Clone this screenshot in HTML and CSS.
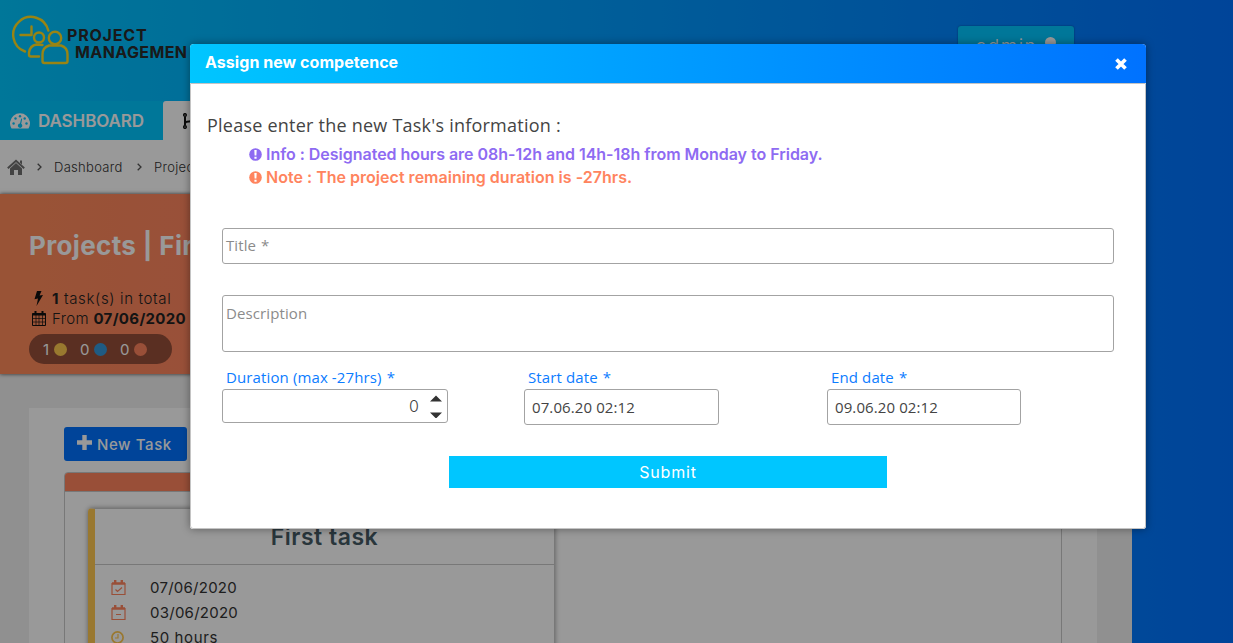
FILE: index.html
```html
<!DOCTYPE html>
<html lang="en">
<head>
<meta charset="utf-8">
<title>Project Management</title>
<link rel="stylesheet" href="styles.css">
</head>
<body>
<div class="page">
  <header class="header">
    <div class="brand">
      <svg class="logo" width="58" height="50" viewBox="0 0 58 50" fill="none" stroke="#ffdc20" stroke-width="2.4" stroke-linecap="round" stroke-linejoin="round">
        <path d="M14 36.5A17.800 17.800 0 1 1 37.300 15.500M20.500 11.500v8.500H9.500"/>
        <circle cx="28" cy="22.500" r="5"/>
        <path d="M28 41.500h-8q-2 0-2-2v-2q1-7 7.500-8l6 .5"/>
        <circle cx="44" cy="23" r="6.200"/>
        <path d="M38 30.500h12q6.500 2 6.500 9v6.500q0 2-2 2h-21q-2 0-2-2v-6.500q0-7 6.500-9z"/>
      </svg>
      <div class="brand-name"><span class="brand-1">PROJECT</span><span class="brand-2">MANAGEMEN</span></div>
    </div>
    <div class="user"><span class="user-name">admin</span><svg width="12" height="16" viewBox="0 0 12 16" fill="#fff"><circle cx="5.500" cy="5.500" r="5.500"/><path d="M0 16q0-5 6-5t6 5z"/></svg></div>
  </header>
  <nav class="tabs">
    <div class="tab tab-on"><svg width="20" height="16" viewBox="0 0 20 16"><path fill="#fff" d="M1.500 15.500A10 10 0 1 1 18.500 15.500z"/><g fill="#00c6ff"><circle cx="3.600" cy="10.500" r="1.200"/><circle cx="5.500" cy="5.500" r="1.200"/><circle cx="10" cy="3.200" r="1.200"/><circle cx="14.700" cy="5.500" r="1.200"/><circle cx="16.500" cy="10.500" r="1.200"/><path d="M11.200 5.500l1 .3-1 5a2.200 2.200 0 1 1-1.200-.3z"/></g></svg><span class="tab-text">DASHBOARD</span></div>
    <div class="tab tab-white"><svg width="14" height="16" viewBox="0 0 14 16" fill="none" stroke="#111" stroke-width="1.500"><circle cx="2" cy="2" r="1.300"/><circle cx="2" cy="14" r="1.300"/><path stroke-width="2" d="M2 3.500v9M2 10.500q0-2 4-2t4-4"/></svg></div>
  </nav>
  <div class="crumbs">
    <svg width="18" height="17" viewBox="0 0 18 17"><path fill="#707070" d="M9 4l6 5.500V16h-4v-5H7v5H3V9.500z"/><path fill="none" stroke="#707070" stroke-width="2" d="M.8 9.300L9 1.800l8.200 7.500"/><path fill="#707070" d="M13 1.500h2v4l-2-1.800z"/></svg>
    <svg class="sep" width="5" height="8" viewBox="0 0 5 8" fill="none" stroke="#555" stroke-width="1.300"><path d="M.7.700L4 4 .7 7.300"/></svg>
    <span class="crumb crumb-a">Dashboard</span>
    <svg class="sep" width="5" height="8" viewBox="0 0 5 8" fill="none" stroke="#555" stroke-width="1.300"><path d="M.7.700L4 4 .7 7.300"/></svg>
    <span class="crumb crumb-b">Projec</span>
  </div>
  <section class="banner">
    <h1 class="title">Projects | Fir</h1>
    <div class="meta meta-a"><svg width="18" height="15" viewBox="0 0 18 15"><path fill="#111" d="M8 0h4.500L10.500 4.500 14 4 7.500 15 9 7.500 5.500 8.300z"/></svg><span class="meta-text"><b>1</b> task(s) in total</span></div>
    <div class="meta meta-b"><svg width="18" height="16" viewBox="0 0 18 16" fill="none" stroke="#111"><path d="M3.500 3.500h13v12h-13z"/><path stroke-width=".7" d="M3.500 8.500h13M3.500 12h13M7 5v10M10 5v10M13.500 5v10"/><path stroke-width="2" d="M3.500 4.500h13M6.500 1v3.500M13.500 1v3.500"/></svg><span class="meta-text date-line">From <b>07/06/2020</b></span></div>
    <div class="counts"><span class="one">1</span><i class="dot yellow"></i><span>0</span><i class="dot blue"></i><span>0</span><i class="dot coral"></i></div>
  </section>
  <main class="main">
    <div class="panel">
      <div class="new-task"><svg width="15" height="15" viewBox="0 0 15 15"><path stroke="#fff" stroke-width="4.400" stroke-linejoin="round" d="M7.500 0v15M0 7.500h15"/></svg><span class="new-text">New Task</span></div>
      <div class="board">
        <div class="board-head"></div>
        <div class="card">
          <div class="card-head"><span class="card-title">First task</span></div>
          <div class="card-body">
            <div class="row"><svg width="15" height="15" viewBox="0 0 15 15" fill="none" stroke="#ff845e" stroke-width="1.200"><path d="M1 3.500h13v11H1zM4.500 9.500l2 2 4.500-4"/><path stroke-width="2.400" d="M1 3.500h13M4.200 0v4M10.800 0v4"/></svg><span>07/06/2020</span></div>
            <div class="row"><svg width="15" height="15" viewBox="0 0 15 15" fill="none" stroke="#ff845e" stroke-width="1.200"><path d="M1 3.500h13v11H1zM5 9.500h5"/><path stroke-width="2.400" d="M1 3.500h13M4.200 0v4M10.800 0v4"/></svg><span>03/06/2020</span></div>
            <div class="row"><svg width="15" height="15" viewBox="0 0 15 15" fill="none" stroke="#ffc850" stroke-width="1.700"><circle cx="6.500" cy="7.500" r="5.600"/><path stroke-width="1.200" d="M7 4v4H4"/></svg><span class="hours">50 hours</span></div>
          </div>
        </div>
      </div>
    </div>
  </main>
</div>
<div class="overlay">
  <div class="modal">
    <div class="modal-head"><span class="modal-title">Assign new competence</span><svg width="12" height="12" viewBox="0 0 12 12"><path stroke="#fff" stroke-width="3.700" d="M1.500 1.500l9 9M10.500 1.500l-9 9"/></svg></div>
    <div class="modal-body">
      <p class="lead">Please enter the new Task's information :</p>
      <div class="note info"><svg width="13" height="13" viewBox="0 0 13 13"><circle cx="6.500" cy="6.500" r="6.300" fill="currentColor"/><path fill="#fff" d="M5.300 2h2.400l-.3 5.500H5.600zM5.400 8.700h2.200v2.100H5.400z"/></svg><span class="info-text">Info : Designated hours are 08h-12h and 14h-18h from Monday to Friday.</span></div>
      <div class="note warn"><svg width="13" height="13" viewBox="0 0 13 13"><circle cx="6.500" cy="6.500" r="6.300" fill="currentColor"/><path fill="#fff" d="M5.300 2h2.400l-.3 5.500H5.600zM5.400 8.700h2.200v2.100H5.400z"/></svg><span class="warn-text">Note : The project remaining duration is -27hrs.</span></div>
      <div class="field title-field">Title <span class="star">*</span></div>
      <div class="field desc-field">Description</div>
      <div class="trio">
        <div class="col"><label class="label">Duration (max -27hrs) <span class="star">*</span></label><div class="box num"><span class="zero">0</span><svg width="12" height="24" viewBox="0 0 12 24" fill="#333"><path d="M0 7.500L6 1.500l6 6zM0 18.500h12l-6 6z"/></svg></div></div>
        <div class="col"><label class="label">Start date <span class="star">*</span></label><div class="box date">07.06.20 02:12</div></div>
        <div class="col"><label class="label">End date <span class="star">*</span></label><div class="box date end">09.06.20 02:12</div></div>
      </div>
      <div class="submit">Submit</div>
    </div>
  </div>
</div>
</body>
</html>
```
FILE: styles.css
```css
* { box-sizing: border-box; }
body { margin: 0; width: 1233px; height: 643px; overflow: hidden; font-family: Inter, "Open Sans", sans-serif; background: linear-gradient(to right, #00c6ff, #0072ff); }
svg { display: block; flex: none; }
span, h1 { white-space: nowrap; }
.page { height: 643px; overflow: hidden; }
.header { height: 101px; display: flex; justify-content: space-between; padding: 15px 159px 0 11px; }
.brand { display: flex; height: 50px; }
.brand-name { display: flex; flex-direction: column; padding-top: 12px; font-size: 16px; font-weight: 700; line-height: 17px; color: #2a2a2a; }
.brand-1 { margin-left: -2px; letter-spacing: .8px; }
.brand-2 { margin-left: 6px; letter-spacing: .4px; }
.user { margin-top: 11px; width: 116px; height: 39px; border-radius: 3px; background: #00c6ff; color: #fff; display: flex; padding: 11px 0 0 18px; gap: 8px; box-shadow: 0 0 2px rgba(0,0,0,.4); }
.user-name { font-size: 19px; line-height: 20px; letter-spacing: 1.400px; font-weight: 300; }
.tabs { display: flex; height: 39px; }
.tab { display: flex; align-items: center; padding-left: 10px; gap: 8px; }
.tab-on { width: 163px; background: #00c6ff; color: #fff; }
.tab-text { font-size: 17px; font-weight: 600; letter-spacing: -.1px; padding-top: 1px; }
.tab-white { width: 200px; background: #fff; border-radius: 3px 3px 0 0; padding-left: 20px; }
.crumbs { width: 1132px; height: 54px; background: #fff; display: flex; align-items: center; padding-left: 7px; color: #333; font-size: 13px; font-weight: 300; }
.sep { margin: 0 12px; }
.crumbs .crumb { letter-spacing: .3px; }
.crumb-a { width: 71px; }
.banner { width: 1132px; height: 180px; padding: 36px 0 0 29px; background: linear-gradient(to right, #ff8b5a, #ff8660 200px); box-shadow: 0 0 4px rgba(0,0,0,.7); position: relative; }
.title { margin: 0; font-size: 26px; line-height: 32px; font-weight: 700; color: #fff; letter-spacing: .35px; }
.meta { display: flex; align-items: center; gap: 5px; height: 20px; color: #222; font-size: 15px; font-weight: 300; }
.meta-a { margin-top: 26px; letter-spacing: .65px; }
.meta-b { letter-spacing: .35px; }
.meta b { font-weight: 700; }
.counts { margin-top: 6px; width: 143px; height: 30px; border-radius: 15px; background: #964f39; color: #fff; display: flex; align-items: center; padding-left: 14px; font-size: 15px; }
.counts span { width: 14px; }
.counts .one { width: 11px; }
.dot { width: 13px; height: 13px; border-radius: 50%; margin-right: 13px; }
.yellow { background: #ffca4f; } .blue { background: #3498db; } .coral { background: #ff845e; }
.main { width: 1132px; height: 269px; background: #f1f1f1; padding: 34px 35px 0 29px; }
.panel { height: 235px; background: #fff; padding: 19px 35px 0; overflow: hidden; }
.new-task { width: 123px; height: 34px; border-radius: 3px; background: #0072ff; color: #fff; display: flex; align-items: center; padding-left: 13px; gap: 5px; font-size: 15px; font-weight: 500; }
.new-task svg { margin-bottom: 3px; }
.new-text { letter-spacing: .6px; }
.board { margin-top: 11px; border: 1px solid #c8c8c8; border-radius: 4px 4px 0 0; height: 300px; overflow: hidden; }
.board-head { height: 19px; background: #ff845e; border-bottom: 1px solid #c8c8c8; }
.card { margin: 16px 0 0 23px; width: 467px; height: 240px; border: 1px solid #c8c8c8; border-left: 7px solid #ffc850; border-radius: 4px; box-shadow: 0 0 5px rgba(0,0,0,.4); }
.card-head { height: 56px; border-bottom: 1px solid #c8c8c8; text-align: center; padding-top: 14px; }
.card-title { font-size: 23px; line-height: 28px; font-weight: 600; color: #455a64; letter-spacing: .5px; }
.card-body { padding: 10px 0 0 16px; }
.row { height: 25px; display: flex; align-items: center; gap: 24px; font-size: 15px; color: #333; letter-spacing: .25px; }
.hours { letter-spacing: .6px; }
.overlay { position: absolute; inset: 0; background: rgba(0,0,0,.4); }
.modal { position: absolute; left: 190px; top: 44px; width: 956px; height: 485px; background: #fff; border-radius: 4px 4px 3px 3px; box-shadow: 0 0 8px rgba(0,0,0,.4); overflow: hidden; }
.modal-head { height: 39px; background: linear-gradient(to right, #00c6ff, #0072ff); display: flex; align-items: center; justify-content: space-between; padding: 0 19px 0 15px; }
.modal-title { font-size: 16px; font-weight: 700; color: #fff; padding-bottom: 3px; letter-spacing: .05px; }
.modal-body { height: 446px; border: 1px solid #c4c4c4; border-radius: 0 0 3px 3px; padding: 29px 31px 0; font-family: "Open Sans", sans-serif; }
.lead { margin: 0 0 0 -15px; font-size: 18px; line-height: 24px; color: #444; letter-spacing: .23px; }
.note { display: flex; align-items: center; gap: 4px; padding-left: 27px; font-family: Inter, sans-serif; font-size: 16px; font-weight: 600; letter-spacing: -.02px; }
.info { margin-top: 6px; color: #8e6bf2; height: 22px; }
.warn { color: #ff845e; height: 24px; letter-spacing: .02px; }
.field { border: 1px solid #a3a3a3; border-radius: 3px; font-size: 15px; color: #8b8b8b; padding: 6px 3px; line-height: 20px; letter-spacing: .1px; }
.star { margin-left: 1px; }
.title-field { margin-top: 39px; height: 36px; }
.desc-field { margin-top: 31px; height: 57px; padding-top: 7px; }
.trio { display: grid; grid-template-columns: 302px 303px 194px; margin-top: 15px; }
.label { display: block; height: 22px; line-height: 20px; font-size: 15px; color: #0b7cff; padding-left: 4px; letter-spacing: .12px; }
.box { border: 1px solid #a3a3a3; border-radius: 3px; color: #444; font-size: 15px; letter-spacing: .1px; display: flex; align-items: center; }
.num { width: 226px; height: 34px; justify-content: flex-end; gap: 11px; padding-right: 5px; }
.zero { font-family: Inter, sans-serif; font-weight: 300; font-size: 16px; }
.date { width: 195px; height: 36px; padding-left: 7px; }
.end { width: 194px; }
.submit { margin: 31px 0 0 227px; width: 438px; height: 32px; background: #00c6ff; color: #fff; text-align: center; line-height: 33px; font-family: Inter, sans-serif; font-size: 16px; letter-spacing: .8px; }
```
